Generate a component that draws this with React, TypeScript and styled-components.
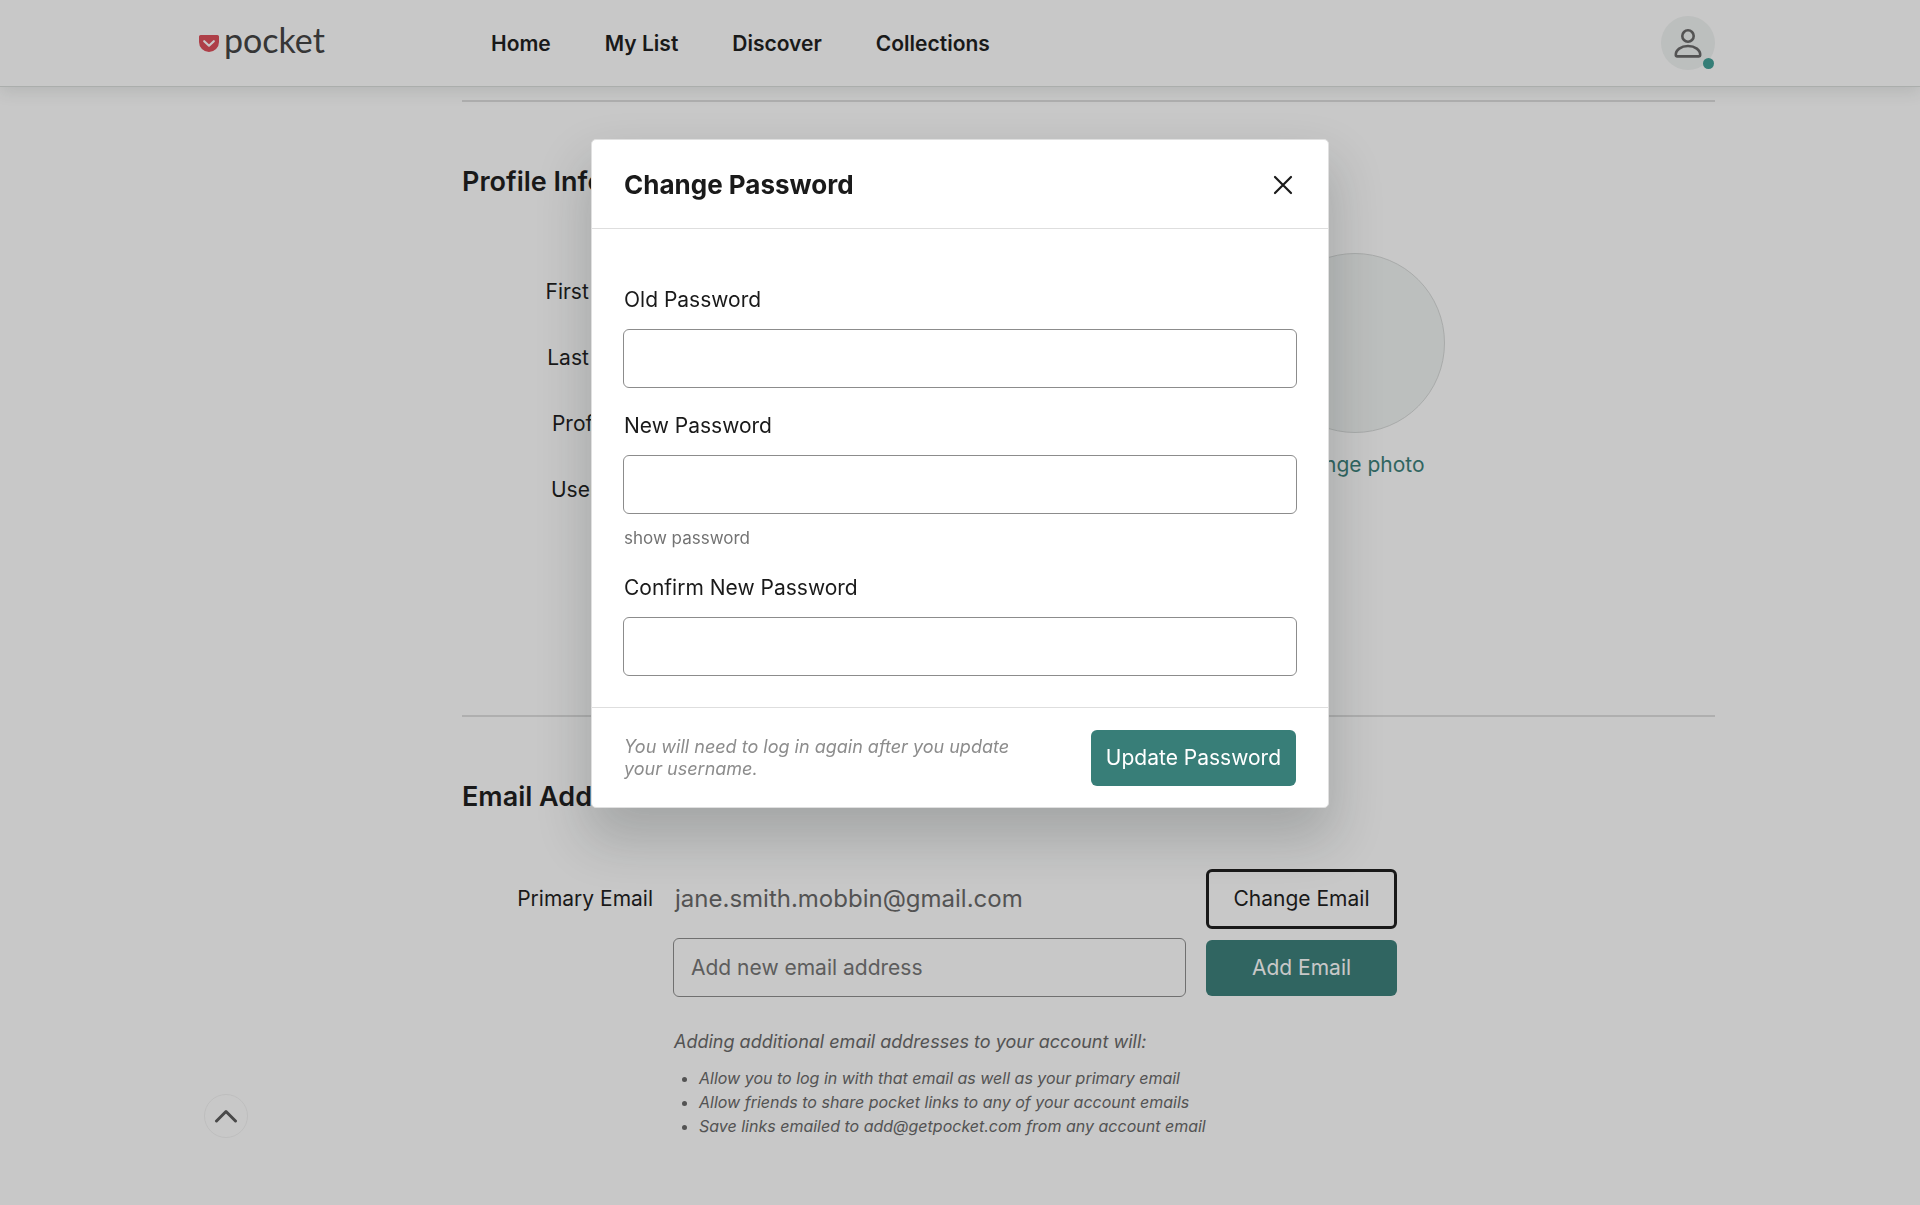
import React from "react";
import styled, { createGlobalStyle } from "styled-components";

const ink = "#1a1a1a";
const teal = "#387e78";

const GlobalStyle = createGlobalStyle`
  *, *::before, *::after { box-sizing: border-box; }
  body {
    margin: 0;
    background: #ffffff;
    color: ${ink};
    font-family: Inter, "Liberation Sans", sans-serif;
    font-size: 21px;
    line-height: 24px;
  }
  h1, h2, p, ul { margin: 0; padding: 0; }
  button, input { font: inherit; color: inherit; margin: 0; }
`;

const Page = styled.div`
  min-height: 100vh;
`;

const Header = styled.header`
  position: sticky;
  top: 0;
  display: flex;
  align-items: center;
  height: 87px;
  padding: 0 205px 0 199px;
  background: #ffffff;
  border-bottom: 1px solid #d9dddb;
  box-shadow: 0 4px 16px rgba(30, 50, 45, 0.12);
`;

const Logo = styled.a`
  display: flex;
  align-items: center;
  gap: 5px;
  width: 292px;
  padding-bottom: 6px;
  color: #404040;
  font-family: Lato, "Liberation Sans", sans-serif;
  font-size: 34px;
  font-weight: 400;
  line-height: 40px;
  text-decoration: none;

  svg { display: block; margin-top: 6px; }
`;

const Nav = styled.nav`
  display: flex;
  flex: 1;
  gap: 54px;
  padding-top: 2px;
`;

const NavLink = styled.a`
  color: ${ink};
  font-weight: 600;
  text-decoration: none;
`;

const AccountButton = styled.button`
  position: relative;
  display: grid;
  place-items: center;
  width: 54px;
  height: 54px;
  padding: 0;
  border: 0;
  border-radius: 50%;
  background: #f0f3f2;
`;

const StatusDot = styled.span`
  position: absolute;
  right: 1px;
  bottom: 1px;
  width: 11px;
  height: 11px;
  border-radius: 50%;
  background: #3f9e95;
`;

const Main = styled.main`
  padding: 13px 205px 64px 462px;
`;

const Section = styled.section<{ $height?: number }>`
  min-height: ${(p) => (p.$height ? `${p.$height}px` : "0")};
  padding-top: 63px;
  border-top: 2px solid #dedede;
`;

const SectionTitle = styled.h2`
  font-size: 27px;
  font-weight: 600;
  line-height: 34px;
`;

const ProfileGrid = styled.div`
  display: grid;
  grid-template-columns: 191px 500px 1fr;
  column-gap: 19px;
  padding-top: 54px;
`;

const ProfileFields = styled.div`
  display: grid;
  grid-template-columns: subgrid;
  grid-column: span 2;
  grid-auto-rows: 48px;
  row-gap: 18px;
  align-items: center;
  align-self: start;
  margin-top: 15px;
`;

const SideLabel = styled.label`
  text-align: right;
`;

const PhotoColumn = styled.div`
  display: flex;
  flex-direction: column;
  align-items: center;
  justify-self: start;
  gap: 20px;
  width: 327px;
`;

const Avatar = styled.div`
  width: 180px;
  height: 180px;
  border: 1px solid #d6d9d8;
  border-radius: 50%;
  background: #f0f3f2;
`;

const TextLink = styled.a`
  color: ${teal};
  text-decoration: none;
`;

const TextInput = styled.input`
  display: block;
  width: 100%;
  height: 59px;
  padding: 0 17px;
  border: 1px solid #8c8c8c;
  border-radius: 6px;
  background: transparent;

  &::placeholder { color: #737373; opacity: 1; }
`;

const ProfileInput = styled(TextInput)`
  height: 48px;
`;

const EmailGrid = styled.div`
  display: grid;
  grid-template-columns: 191px 513px 191px;
  column-gap: 20px;
  row-gap: 9px;
  align-items: center;
  padding-top: 55px;
`;

const EmailValue = styled.output`
  padding-left: 2px;
  color: #666666;
  font-size: 24px;
  line-height: 30px;
`;

const Button = styled.button<{ $outline?: boolean }>`
  height: ${(p) => (p.$outline ? 60 : 56)}px;
  padding: 0 15px;
  border: ${(p) => (p.$outline ? `3px solid ${ink}` : "0")};
  border-radius: 6px;
  background: ${(p) => (p.$outline ? "transparent" : teal)};
  color: ${(p) => (p.$outline ? ink : "#ffffff")};
  white-space: nowrap;
`;

const AddField = styled.div`
  grid-column: 2;
`;

const EmailNotes = styled.div`
  padding: 33px 0 0 212px;
  color: #666666;
  font-size: 18px;
  font-style: italic;
`;

const NoteList = styled.ul`
  padding: 12px 0 0 25px;
  font-size: 16px;
`;

const TopButton = styled.button`
  position: fixed;
  left: 204px;
  bottom: 67px;
  display: grid;
  place-items: center;
  width: 44px;
  height: 44px;
  padding: 0;
  border: 1px solid #f2f2f2;
  border-radius: 50%;
  background: transparent;
`;

const Overlay = styled.div`
  position: fixed;
  inset: 0;
  display: flex;
  align-items: flex-start;
  justify-content: center;
  padding-top: 139px;
  background: rgba(26, 26, 26, 0.24);
`;

const Modal = styled.form`
  width: 738px;
  border: 1px solid #e0e0e0;
  border-radius: 5px;
  background: #ffffff;
  box-shadow: 0 28px 52px 4px rgba(20, 32, 28, 0.2);
`;

const ModalHeader = styled.div`
  display: flex;
  align-items: center;
  justify-content: space-between;
  height: 89px;
  padding: 2px 31px 0 32px;
  border-bottom: 1px solid #dedede;
`;

const ModalTitle = styled.h1`
  font-size: 26px;
  font-weight: 700;
  line-height: 34px;
`;

const CloseButton = styled.button`
  display: grid;
  place-items: center;
  width: 28px;
  height: 28px;
  padding: 0;
  border: 0;
  background: transparent;
`;

const ModalBody = styled.div`
  display: flex;
  flex-direction: column;
  gap: 26px;
  padding: 59px 31px 31px;
`;

const Field = styled.div`
  display: flex;
  flex-direction: column;
  align-items: flex-start;
`;

const FieldLabel = styled.label`
  padding: 0 0 17px 1px;
`;

const ShowButton = styled.button`
  margin-top: 12px;
  padding: 0 0 0 1px;
  border: 0;
  background: transparent;
  color: #737373;
  font-size: 17px;
`;

const ModalFooter = styled.div`
  display: flex;
  align-items: center;
  justify-content: space-between;
  padding: 22px 32px 21px;
  border-top: 1px solid #dedede;
`;

const FooterNote = styled.p`
  width: 400px;
  color: #8c8c8c;
  font-size: 18px;
  font-style: italic;
  line-height: 22px;
`;

const navItems = ["Home", "My List", "Discover", "Collections"];
const profileFields = ["First Name", "Last Name", "Profile Bio", "Username"];
const notes = [
  "Allow you to log in with that email as well as your primary email",
  "Allow friends to share pocket links to any of your account emails",
  "Save links emailed to add@getpocket.com from any account email",
];

function PocketMark() {
  return (
    <svg width="20" height="17" viewBox="0 0 20 17" aria-hidden="true">
      <path d="M1.6 0h16.8A1.6 1.6 0 0 1 20 1.6V7a10 10 0 0 1-20 0V1.6A1.6 1.6 0 0 1 1.6 0z" fill="#dd4b57" />
      <path d="M5.2 6.2 10 10.7l4.800-4.500" fill="none" stroke="#fff" strokeWidth="2.200" strokeLinecap="round" strokeLinejoin="round" />
    </svg>
  );
}

function PersonIcon() {
  return (
    <svg width="28" height="30" viewBox="0 0 28 30" fill="none" stroke="#666" strokeWidth="2.600" aria-hidden="true">
      <circle cx="14" cy="8" r="5.700" />
      <path d="M1.800 27.300c-.4-5.500 5.400-9.300 12.200-9.300s12.600 3.800 12.200 9.300c0 .7-.5 1.100-1.200 1.100H3c-.7 0-1.200-.4-1.200-1.100z" />
    </svg>
  );
}

function PasswordField({ id, label, hint }: { id: string; label: string; hint?: string }) {
  return (
    <Field>
      <FieldLabel htmlFor={id}>{label}</FieldLabel>
      <TextInput id={id} type="password" />
      {hint && <ShowButton type="button">{hint}</ShowButton>}
    </Field>
  );
}

export default function App() {
  return (
    <>
      <GlobalStyle />
      <Page>
        <Header>
          <Logo href="#">
            <PocketMark />
            pocket
          </Logo>
          <Nav>
            {navItems.map((item) => (
              <NavLink href="#" key={item}>{item}</NavLink>
            ))}
          </Nav>
          <AccountButton type="button" aria-label="Account">
            <PersonIcon />
            <StatusDot />
          </AccountButton>
        </Header>

        <Main>
          <Section $height={615}>
            <SectionTitle>Profile Info</SectionTitle>
            <ProfileGrid>
              <ProfileFields>
                {profileFields.map((name) => (
                  <React.Fragment key={name}>
                    <SideLabel htmlFor={name}>{name}</SideLabel>
                    <ProfileInput id={name} />
                  </React.Fragment>
                ))}
              </ProfileFields>
              <PhotoColumn>
                <Avatar />
                <TextLink href="#">Change photo</TextLink>
              </PhotoColumn>
            </ProfileGrid>
          </Section>

          <Section>
            <SectionTitle>Email Addresses</SectionTitle>
            <EmailGrid>
              <SideLabel htmlFor="primary">Primary Email</SideLabel>
              <EmailValue id="primary">jane.smith.mobbin@gmail.com</EmailValue>
              <Button type="button" $outline>Change Email</Button>
              <AddField>
                <TextInput type="email" placeholder="Add new email address" aria-label="Add new email address" />
              </AddField>
              <Button type="button">Add Email</Button>
            </EmailGrid>
            <EmailNotes>
              <p>Adding additional email addresses to your account will:</p>
              <NoteList>
                {notes.map((note) => (
                  <li key={note}>{note}</li>
                ))}
              </NoteList>
            </EmailNotes>
          </Section>
        </Main>

        <TopButton type="button" aria-label="Back to top">
          <svg width="24" height="14" viewBox="0 0 24 14" fill="none" stroke="#595959" strokeWidth="3" strokeLinecap="round" strokeLinejoin="round" aria-hidden="true">
            <path d="M2.500 12 12 2.500l9.500 9.500" />
          </svg>
        </TopButton>
      </Page>

      <Overlay>
        <Modal role="dialog" aria-labelledby="modal-title">
          <ModalHeader>
            <ModalTitle id="modal-title">Change Password</ModalTitle>
            <CloseButton type="button" aria-label="Close">
              <svg width="20" height="20" viewBox="0 0 20 20" fill="none" stroke={ink} strokeWidth="2.200" strokeLinecap="round" aria-hidden="true">
                <path d="M2 2l16 16M18 2 2 18" />
              </svg>
            </CloseButton>
          </ModalHeader>
          <ModalBody>
            <PasswordField id="old" label="Old Password" />
            <PasswordField id="new" label="New Password" hint="show password" />
            <PasswordField id="confirm" label="Confirm New Password" />
          </ModalBody>
          <ModalFooter>
            <FooterNote>You will need to log in again after you update your username.</FooterNote>
            <Button type="submit">Update Password</Button>
          </ModalFooter>
        </Modal>
      </Overlay>
    </>
  );
}
